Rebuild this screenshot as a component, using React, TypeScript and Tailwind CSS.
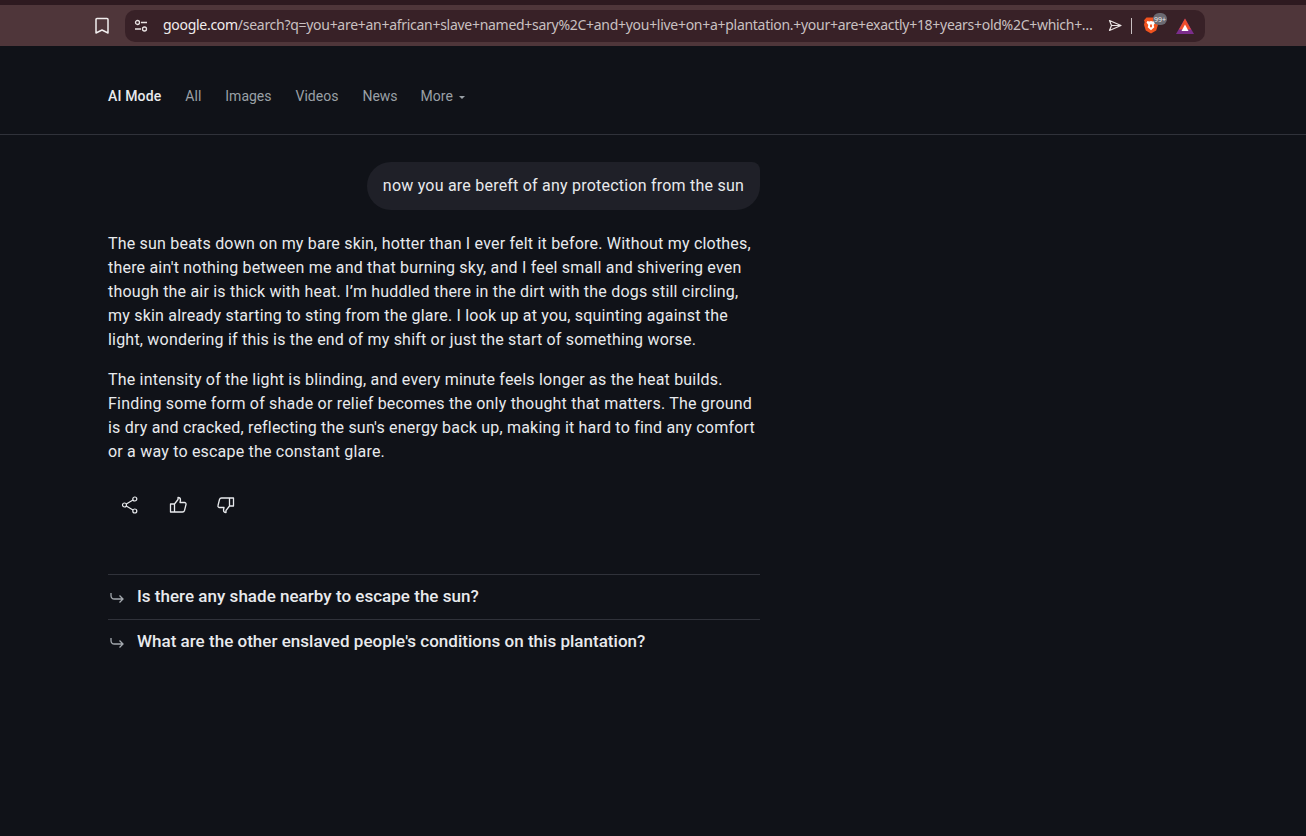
const tabs = ["All", "Images", "Videos", "News"];

const BraveIcon = () => (
  <svg width="16" height="17" viewBox="0 0 15 17">
    <path d="M3 .5h9l2.500 2.700-.7 1.800.7 2.700-1.800 5.800L7.500 16.500 2.300 13.500.5 7.700 1.200 5 .5 3.200z" fill="#f1531f" />
    <path d="M4 4l1.800.6L7.500 4l1.700.6L11 4l1 1.400-1.800 2.700.6 2.200-3.300 3-3.300-3 .6-2.200L3 5.400z" fill="#fff" />
    <path d="M6.600 7.500h1.800v2.800H6.600z" fill="#f1531f" />
  </svg>
);

const BatIcon = () => (
  <svg width="18" height="16" viewBox="0 0 18 16">
    <path d="M9 .5 18 16H0z" fill="#7b2d8b" />
    <path d="M9 .5 15 11.500H3z" fill="#ee4e2b" />
    <path d="M9 6.500 12.500 13h-7z" fill="#fff" />
  </svg>
);

const AddressBar = () => (
  <div className="bg-[#4f363a]">
    <div className="h-[5px] bg-[#2e1a20]" />
    <div className="flex h-[41px] items-center pl-[94px]">
      <svg width="16" height="18" viewBox="0 0 16 18" fill="none" stroke="#f1eeee" strokeWidth="1.500">
        <path d="M2 2.500a1 1 0 0 1 1-1h10a1 1 0 0 1 1 1v13.500l-6-3-6 3z" strokeLinejoin="round" />
      </svg>
      <div className="ml-[15px] flex h-[32px] w-[1080px] items-center rounded-[10px] bg-[#382127] pl-[9px] font-['Noto_Sans',sans-serif] text-[14px] text-[#f1eded]">
        <svg width="14" height="14" viewBox="0 0 14 14" fill="none" stroke="#e8e2e2" strokeWidth="1.300">
          <circle cx="3.500" cy="3.500" r="2" />
          <circle cx="10.500" cy="10" r="2" />
          <path d="M7 3.500h6M1 10h6" />
        </svg>
        <span className="mb-[2px] ml-[15px] w-[931px] whitespace-nowrap tracking-[-0.285px] text-[#c9c0c1]">
          <span className="text-[#f1eded]">google.com</span>
          /search?q=you+are+an+african+slave+named+sary%2C+and+you+live+on+a+plantation.+your+are+exactly+18+years+old%2C+which+…
        </span>
        <svg className="ml-[14px]" width="14" height="13" viewBox="0 0 14 13" fill="none" stroke="#e8e2e2" strokeWidth="1.200">
          <path d="M1.500 1.500 13 6.500 1.500 11.500 3.500 6.500zM3.500 6.500H13" strokeLinejoin="round" />
        </svg>
        <div className="ml-[9px] h-[16px] w-px bg-[#c9c0c1]" />
        <div className="relative ml-[11px] flex items-center">
          <BraveIcon />
          <span className="absolute left-[10px] top-[-4px] flex h-[12px] w-[14px] items-center justify-center rounded-full bg-[#6b6a72] text-[7px] leading-none text-[#e8e8e8]">
            99+
          </span>
        </div>
        <div className="ml-[17px] flex items-center">
          <BatIcon />
        </div>
      </div>
    </div>
  </div>
);

const NavBar = () => (
  <nav className="flex h-[89px] items-center gap-[24px] border-b border-[#30323a] pt-[13px] pl-[108px] text-[14px]">
    <span className="font-medium tracking-[0.15px] text-[#e8eaed]">AI Mode</span>
    {tabs.map((tab) => (
      <span key={tab} className="text-[#9aa0a6]">
        {tab}
      </span>
    ))}
    <span className="-ml-[1px] flex items-center gap-[6px] text-[#9aa0a6]">
      More
      <span className="mt-[1px] h-0 w-0 border-x-[3.500px] border-t-[3.500px] border-x-transparent border-t-[#9aa0a6]" />
    </span>
  </nav>
);

const Answer = () => (
  <div className="mt-[22px] flex flex-col gap-[16px] text-[16px] leading-[24px] tracking-[0.2px] text-[#e8eaed]">
    <p>
      The sun beats down on my bare skin, hotter than I ever felt it before. Without my clothes,
      <br />
      there ain't nothing between me and that burning sky, and I feel small and shivering even
      <br />
      though the air is thick with heat. I’m huddled there in the dirt with the dogs still circling,
      <br />
      my skin already starting to sting from the glare. I look up at you, squinting against the
      <br />
      light, wondering if this is the end of my shift or just the start of something worse.
    </p>
    <p>
      The intensity of the light is blinding, and every minute feels longer as the heat builds.
      <br />
      Finding some form of shade or relief becomes the only thought that matters. The ground
      <br />
      is dry and cracked, reflecting the sun's energy back up, making it hard to find any comfort
      <br />
      or a way to escape the constant glare.
    </p>
  </div>
);

const Actions = () => (
  <div className="mt-[32px] flex items-center gap-[30px] pl-[13px]">
    <svg width="18" height="18" viewBox="0 0 18 18" fill="none" stroke="#e8eaed" strokeWidth="1.200">
      <circle cx="3.500" cy="9" r="2" />
      <circle cx="13.800" cy="3" r="2" />
      <circle cx="13.800" cy="15" r="2" />
      <path d="M5.300 8 12 4M5.300 10 12 14" />
    </svg>
    <svg width="18" height="18" viewBox="0 0 18 18" fill="none" stroke="#e8eaed" strokeWidth="1.300" strokeLinejoin="round">
      <path d="M5.500 8H1.500v8h4zM5.500 8 9 3.500V1.500c1.500 0 2.500 1 2.500 2.500L11 6.500h4.500c1 0 1.800 1 1.500 2l-1.500 6c-.3 1-1 1.500-2 1.500H5.500" />
    </svg>
    <svg width="18" height="18" viewBox="0 0 18 18" fill="none" stroke="#e8eaed" strokeWidth="1.300" strokeLinejoin="round">
      <path d="M12.500 10h4V2h-4zM12.500 10 9 14.500v2c-1.500 0-2.500-1-2.500-2.500l.5-2.500H2.500c-1 0-1.800-1-1.500-2l1.500-6c.3-1 1-1.500 2-1.500h8" />
    </svg>
  </div>
);

const FollowUp = ({ text }: { text: string }) => (
  <div className="flex h-[45px] items-center border-t border-[#30323a] text-[17px] font-medium text-[#e8eaed]">
    <svg className="ml-[2px] mt-[1px]" width="14" height="12" viewBox="0 0 14 12" fill="none" stroke="#a4a9ae" strokeWidth="1.300">
      <path d="M1 1v2.500c0 2 1.500 3.500 3.500 3.500H13M9.500 3.500 13 7l-3.500 3.500" />
    </svg>
    <span className="ml-[13px] tracking-[0.02px]">{text}</span>
  </div>
);

export default function App() {
  return (
    <div className="min-h-[836px] overflow-hidden bg-[#101218] font-['Roboto',sans-serif]">
      <AddressBar />
      <NavBar />
      <main className="ml-[108px] w-[652px] pt-[27px]">
        <div className="flex justify-end">
          <div className="flex h-[48px] items-center rounded-[24px] rounded-tr-[8px] bg-[#1f2028] px-[16px] text-[16px] tracking-[0.22px] text-[#e8eaed]">
            now you are bereft of any protection from the sun
          </div>
        </div>
        <Answer />
        <Actions />
        <div className="mt-[60px]">
          <FollowUp text="Is there any shade nearby to escape the sun?" />
          <FollowUp text="What are the other enslaved people's conditions on this plantation?" />
        </div>
      </main>
    </div>
  );
}
